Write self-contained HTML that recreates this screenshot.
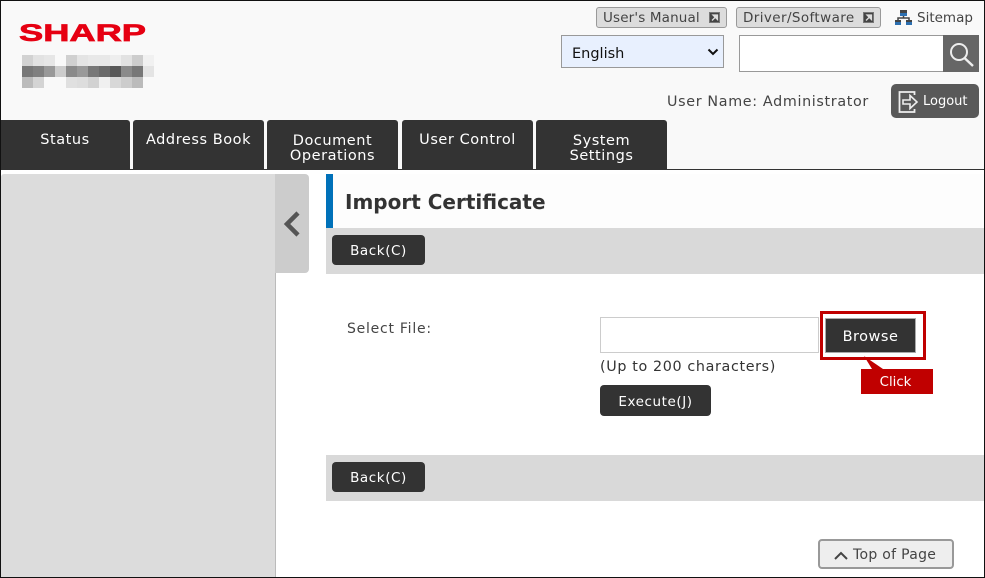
<!DOCTYPE html>
<html>
<head>
<meta charset="utf-8">
<style>
html,body{margin:0;padding:0;background:#fff}
body{width:985px;height:578px;position:relative;overflow:hidden;font-family:"DejaVu Sans","Liberation Sans",sans-serif;font-size:14px;color:#333}
.a{position:absolute;box-sizing:border-box}
.t{position:absolute;white-space:nowrap;line-height:16px}
.tab{position:absolute;top:120px;height:49px;background:#333;color:#fff;border-radius:3px 3px 0 0;text-align:center;font-size:14.5px;line-height:15px;box-sizing:border-box;letter-spacing:.55px}
.btn{position:absolute;background:#333;color:#fff;border-radius:4px;text-align:center;box-sizing:border-box;font-size:13.5px;letter-spacing:.58px}
.lnk{position:absolute;top:7px;height:21px;background:#dcdcdc;border:1px solid #999;border-radius:3px;box-sizing:border-box;color:#444;font-size:13.5px;line-height:20px;padding-left:6px;white-space:nowrap}
.ext{position:absolute;top:4px}
.c{position:absolute;width:11px;height:11px}
</style>
</head>
<body>
<div class="a" style="left:0;top:0;width:985px;height:170px;background:#f9f9f9"></div>

<svg class="a" style="left:18px;top:20px" width="132" height="24"><text x="1" y="21" font-family="Liberation Sans" font-weight="700" font-size="24" fill="#e60012" stroke="#e60012" stroke-width=".7" textLength="127" lengthAdjust="spacingAndGlyphs">SHARP</text></svg>

<!-- mosaic -->
<div class="c" style="left:22px;top:55px;background:#d2d2d2"></div><div class="c" style="left:33px;top:55px;background:#e2e2e2"></div><div class="c" style="left:44px;top:55px;background:#e6e6e6"></div><div class="c" style="left:66px;top:55px;background:#d0d0d0"></div><div class="c" style="left:77px;top:55px;background:#e4e4e4"></div><div class="c" style="left:88px;top:55px;background:#e8e8e8"></div><div class="c" style="left:99px;top:55px;background:#e8e8e8"></div><div class="c" style="left:110px;top:55px;background:#eee"></div><div class="c" style="left:121px;top:55px;background:#e2e2e2"></div><div class="c" style="left:132px;top:55px;background:#cdcdcd"></div><div class="c" style="left:143px;top:55px;background:#f1f1f1"></div>
<div class="c" style="left:22px;top:66px;background:#777"></div><div class="c" style="left:33px;top:66px;background:#808080"></div><div class="c" style="left:44px;top:66px;background:#999"></div><div class="c" style="left:55px;top:66px;background:#ccc"></div><div class="c" style="left:66px;top:66px;background:#8a8a8a"></div><div class="c" style="left:77px;top:66px;background:#999"></div><div class="c" style="left:88px;top:66px;background:#777"></div><div class="c" style="left:99px;top:66px;background:#6a6a6a"></div><div class="c" style="left:110px;top:66px;background:#585858"></div><div class="c" style="left:121px;top:66px;background:#8a8a8a"></div><div class="c" style="left:132px;top:66px;background:#777"></div><div class="c" style="left:143px;top:66px;background:#e4e4e4"></div>
<div class="c" style="left:22px;top:77px;background:#bbb"></div><div class="c" style="left:33px;top:77px;background:#d4d4d4"></div><div class="c" style="left:66px;top:77px;background:#e0e0e0"></div><div class="c" style="left:77px;top:77px;background:#ddd"></div><div class="c" style="left:88px;top:77px;background:#d2d2d2"></div><div class="c" style="left:99px;top:77px;background:#f0f0f0"></div><div class="c" style="left:110px;top:77px;background:#d8d8d8"></div><div class="c" style="left:121px;top:77px;background:#ccc"></div><div class="c" style="left:132px;top:77px;background:#bbb"></div>

<!-- top links -->
<div class="lnk" style="left:596px;width:131px;letter-spacing:.15px">User's Manual<svg class="ext" style="left:112px" width="11" height="11"><rect x=".5" y=".5" width="10" height="10" fill="#444" stroke="#777"/><path d="M3 8.500L7.500 4M4 3h4.500v4.500z" stroke="#ddd" stroke-width="1.300" fill="#ddd"/></svg></div>
<div class="lnk" style="left:736px;width:145px;letter-spacing:.4px">Driver/Software<svg class="ext" style="left:126px" width="11" height="11"><rect x=".5" y=".5" width="10" height="10" fill="#444" stroke="#777"/><path d="M3 8.500L7.500 4M4 3h4.500v4.500z" stroke="#ddd" stroke-width="1.300" fill="#ddd"/></svg></div>
<svg class="a" style="left:894px;top:9px" width="20" height="17"><path d="M6 1h7v6H6zM1 11h6v5H1zM12 11h6v5h-6z" fill="#2c6fb0"/><path d="M6 1h7v3H6zM1 11h6v2H1zM12 11h6v2h-6z" fill="#444"/><path d="M9.500 7v2M4 11V9h11v2" stroke="#444" stroke-width="1.500" fill="none"/></svg>
<div class="t" style="left:917px;top:10px;font-size:13.500px;color:#444">Sitemap</div>

<!-- language select -->
<div class="a" style="left:561px;top:35px;width:163px;height:33px;background:#e8f0fe;border:1px solid #999"></div>
<div class="t" style="left:572px;top:46px;color:#111;font-size:14.500px">English</div>
<svg class="a" style="left:707px;top:48px" width="12" height="8"><path d="M1.500 1.500L6 6l4.500-4.500" fill="none" stroke="#111" stroke-width="2"/></svg>

<!-- search -->
<div class="a" style="left:739px;top:35px;width:206px;height:37px;background:#fff;border:1px solid #999"></div>
<div class="a" style="left:943px;top:35px;width:36px;height:37px;background:#666"></div>
<svg class="a" style="left:943px;top:35px" width="36" height="37"><circle cx="16" cy="17" r="8" fill="none" stroke="#eee" stroke-width="2"/><path d="M21.500 23L30 31" stroke="#eee" stroke-width="2.400"/></svg>

<!-- user -->
<div class="t" style="left:667px;top:94px;font-size:14.300px;color:#444;letter-spacing:.66px">User Name: Administrator</div>
<div class="a" style="left:891px;top:84px;width:88px;height:34px;background:#595959;border-radius:5px"></div>
<svg class="a" style="left:898px;top:90px" width="22" height="24"><path d="M16.500 5V2H1.500v20h15v-3" fill="none" stroke="#eee" stroke-width="1.800"/><path d="M5 10h7V5.500l7 6.500-7 6.500V14H5z" fill="#595959" stroke="#eee" stroke-width="1.600"/></svg>
<div class="t" style="left:923px;top:94px;color:#fff;font-size:13px">Logout</div>

<!-- tabs -->
<div class="tab" style="left:0;width:130px;padding-top:13px;border-radius:0 3px 0 0">Status</div>
<div class="tab" style="left:133px;width:131px;padding-top:13px">Address Book</div>
<div class="tab" style="left:267px;width:131px;padding-top:14px">Document<br>Operations</div>
<div class="tab" style="left:402px;width:131px;padding-top:13px">User Control</div>
<div class="tab" style="left:536px;width:131px;padding-top:14px">System<br>Settings</div>
<div class="a" style="left:0;top:169px;width:985px;height:1px;background:#333"></div>

<!-- sidebar -->
<div class="a" style="left:1px;top:174px;width:274px;height:404px;background:#dcdcdc;border-radius:3px 0 0 0"></div>
<div class="a" style="left:275px;top:174px;width:1px;height:404px;background:#bbb"></div>
<div class="a" style="left:275px;top:174px;width:34px;height:99px;background:#ccc;border-radius:0 4px 4px 0"></div>
<svg class="a" style="left:282px;top:210px" width="20" height="28"><path d="M16 3L5 14l11 11" fill="none" stroke="#555" stroke-width="4.500"/></svg>

<!-- title -->
<div class="a" style="left:326px;top:174px;width:659px;height:54px;background:#fdfdfd"></div>
<div class="a" style="left:326px;top:174px;width:7px;height:54px;background:#0071b9"></div>
<div class="t" style="left:345px;top:191px;font-size:20px;font-weight:700;line-height:22px;color:#333">Import Certificate</div>

<div class="a" style="left:326px;top:228px;width:659px;height:46px;background:#d9d9d9"></div>
<div class="btn" style="left:332px;top:235px;width:93px;height:30px;line-height:32px">Back(C)</div>

<!-- form -->
<div class="t" style="left:347px;top:321px;font-size:14px;color:#444;letter-spacing:.75px">Select File:</div>
<div class="a" style="left:600px;top:317px;width:219px;height:36px;background:#fff;border:1px solid #ccc"></div>
<div class="a" style="left:820px;top:311px;width:106px;height:49px;border:3px solid #c00000;background:#fff"></div>
<div class="btn" style="left:825px;top:318px;width:91px;height:35px;line-height:36px;border:1px solid #aaa;border-radius:0;font-size:14.500px;letter-spacing:.5px">Browse</div>
<div class="t" style="left:600px;top:359px;font-size:14.300px;color:#333;letter-spacing:.64px">(Up to 200 characters)</div>
<div class="btn" style="left:600px;top:385px;width:111px;height:31px;line-height:34px">Execute(J)</div>

<svg class="a" style="left:860px;top:355px" width="30" height="16"><path d="M4 1L23 14H12z" fill="#c00000"/></svg>
<div class="a" style="left:861px;top:369px;width:72px;height:25px;background:#c00000;color:#fff;text-align:center;font-size:13.300px;line-height:27px;padding-right:3px">Click</div>

<div class="a" style="left:326px;top:455px;width:659px;height:46px;background:#d9d9d9"></div>
<div class="btn" style="left:332px;top:462px;width:93px;height:30px;line-height:32px">Back(C)</div>

<!-- top of page -->
<div class="a" style="left:818px;top:539px;width:136px;height:30px;background:#eee;border:2px solid #999;border-radius:4px"></div>
<svg class="a" style="left:833px;top:549px" width="16" height="12"><path d="M2 10l6-6 6 6" fill="none" stroke="#444" stroke-width="2"/></svg>
<div class="t" style="left:853px;top:547px;font-size:14px;color:#444;letter-spacing:.3px">Top of Page</div>

<!-- frame -->
<div class="a" style="left:0;top:0;width:985px;height:578px;border:1px solid #111;pointer-events:none"></div>
</body>
</html>
